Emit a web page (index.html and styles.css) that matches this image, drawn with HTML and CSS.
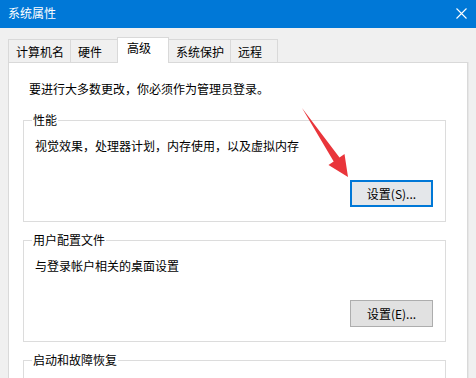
FILE: index.html
```html
<!DOCTYPE html>
<html lang="zh-CN">
<head>
    <meta charset="UTF-8">
    <title>系统属性</title>
    <link rel="stylesheet" href="styles.css">
</head>
<body>
    <div class="titlebar">
        <span class="title">系统属性</span>
        <svg class="close" width="11" height="11" viewBox="0 0 11 11">
            <path d="M0.5 0.5 L10.5 10.5 M10.5 0.5 L0.5 10.5" stroke="#fff" stroke-width="1.1" fill="none"/>
        </svg>
    </div>

    <!-- Tabs -->
    <div class="tabs">
        <div class="tab">计算机名</div>
        <div class="tab">硬件</div>
        <div class="tab active">高级</div>
        <div class="tab">系统保护</div>
        <div class="tab">远程</div>
    </div>

    <div class="panel">
        <p class="intro">要进行大多数更改，你必须作为管理员登录。</p>

        <fieldset class="group">
            <legend>性能</legend>
            <p class="desc">视觉效果，处理器计划，内存使用，以及虚拟内存</p>
            <div class="actions">
                <button class="btn default">设置(S)...</button>
            </div>
        </fieldset>

        <fieldset class="group">
            <legend>用户配置文件</legend>
            <p class="desc">与登录帐户相关的桌面设置</p>
            <div class="actions">
                <button class="btn">设置(E)...</button>
            </div>
        </fieldset>

        <fieldset class="group">
            <legend>启动和故障恢复</legend>
            <p class="desc">系统启动、系统故障和调试信息</p>
        </fieldset>
    </div>

    <!-- red annotation arrow -->
    <svg class="arrow" width="476" height="378" viewBox="0 0 476 378">
        <polygon points="302,108 339.5,157.6 344.5,154 348,177 328.5,165 333.7,161.6" fill="#e9353b"/>
    </svg>
</body>
</html>
```

FILE: styles.css
```css
body {
    margin: 0;
    font-family: "Noto Sans CJK SC", "Noto Sans", sans-serif;
    font-size: 12px;
    line-height: 16px;
    color: #000;
    background: #f0f0f0;
    height: 378px;
    overflow: hidden;
    position: relative;
}

p {
    margin: 0;
}

.titlebar {
    height: 28px;
    background: #0078d7;
    color: #fff;
    display: flex;
    align-items: center;
    justify-content: space-between;
    padding: 0 9px 0 8px;
    box-sizing: border-box;
}

.title {
    padding-bottom: 2px;
}

.close {
    display: block;
    margin-bottom: 2px;
}

.tabs {
    display: flex;
    align-items: flex-end;
    height: 25px;
    margin-top: 9px;
    padding-left: 8px;
}

.tab {
    box-sizing: border-box;
    height: 23px;
    min-width: 48px;
    padding: 4px 6px 0 7px;
    border: 1px solid #d9d9d9;
    border-bottom: none;
    background: #f0f0f0;
    white-space: nowrap;
}

.tab + .tab {
    margin-left: -1px;
}

.tab.active {
    height: 26px;
    min-width: 52px;
    padding: 2px 6px 0 9px;
    margin-bottom: -1px;
    background: #fff;
    position: relative;
    z-index: 1;
}

.panel {
    margin: 0 8px;
    height: 420px;
    background: #fff;
    border: 1px solid #d9d9d9;
    box-shadow: 1px 0 0 #e6e6e6;
    padding: 18px 21px 0 14px;
}

.intro {
    margin-left: 6px;
}

.group {
    margin: 15px 0 0;
    padding: 0 12px 14px 11px;
    border: 1px solid #dcdcdc;
    min-width: 0;
}

.group + .group {
    margin-top: 10px;
}

.group legend {
    margin-left: -3px;
    padding: 0 1px;
    line-height: 16px;
}

.desc {
    margin-top: 10px;
}

.actions {
    display: flex;
    justify-content: flex-end;
    margin-top: 26px;
}

.btn {
    box-sizing: border-box;
    width: 83px;
    height: 27px;
    font: inherit;
    color: #000;
    background: #e1e1e1;
    border: 1px solid #adadad;
    padding: 0;
}

.btn.default {
    border: 2px solid #0078d7;
    background: #e4e7ea;
}

.arrow {
    position: absolute;
    left: 0;
    top: 0;
    pointer-events: none;
}
```
